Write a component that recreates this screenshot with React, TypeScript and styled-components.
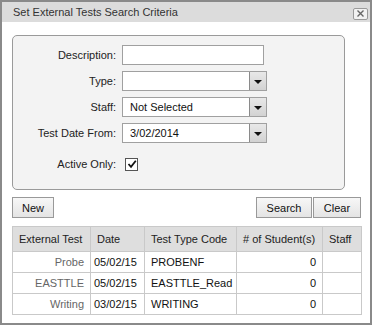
import styled, { createGlobalStyle } from "styled-components";

const GlobalStyle = createGlobalStyle`
  body {
    margin: 0;
    font-family: "Liberation Sans", Arial, sans-serif;
    font-size: 11px;
    color: #222;
  }
`;

const Window = styled.div`
  width: 372px;
  height: 325px;
  box-sizing: border-box;
  border: 2px solid #8a8a8a;
  background: #fff;
  display: flex;
  flex-direction: column;
`;

const TitleBar = styled.div`
  height: 20px;
  background: #dcdcdc;
  display: flex;
  align-items: center;
  justify-content: space-between;
  padding: 0 2px 0 11px;
  font-size: 11px;
  color: #333;
`;

const CloseButton = styled.div`
  width: 13px;
  height: 10px;
  border: 1px solid #9a9a9a;
  border-radius: 2px;
  background: #f2f2f2;
  display: flex;
  align-items: center;
  justify-content: center;
  margin-top: 3px;
  svg {
    width: 7px;
    height: 7px;
  }
`;

const Content = styled.div`
  padding: 13px 9px 0 10px;
  display: flex;
  flex-direction: column;
`;

const Panel = styled.div`
  width: 333px;
  height: 155px;
  box-sizing: border-box;
  border: 1px solid #9a9a9a;
  border-radius: 5px;
  background: #f3f3f3;
  padding-top: 9px;
  display: grid;
  grid-template-columns: 103px auto;
  grid-auto-rows: 20px;
  row-gap: 6px;
  column-gap: 6px;
  align-items: center;
  align-content: start;
`;

const Label = styled.label<{ $extra?: number }>`
  text-align: right;
  margin-top: ${(p) => p.$extra ?? 0}px;
`;

const TextInput = styled.div`
  width: 142px;
  height: 20px;
  box-sizing: border-box;
  border: 1px solid #a0a0a0;
  background: #fff;
`;

const Select = styled.div`
  width: 145px;
  height: 20px;
  box-sizing: border-box;
  border: 1px solid #a0a0a0;
  background: #fff;
  display: flex;
  align-items: stretch;
`;

const SelectValue = styled.div`
  flex: 1;
  padding-left: 7px;
  display: flex;
  align-items: center;
  color: #111;
`;

const SelectArrow = styled.div`
  width: 16px;
  border-left: 1px solid #8a8a8a;
  background: linear-gradient(#e8e8e8, #d2d2d2);
  display: flex;
  align-items: center;
  justify-content: center;
  &::after {
    content: "";
    border-left: 4px solid transparent;
    border-right: 4px solid transparent;
    border-top: 4px solid #111;
    margin-top: 2px;
  }
`;

const CheckWrap = styled.div`
  margin-top: 10px;
  display: flex;
  align-items: center;
  padding-left: 3px;
`;

const CheckBox = styled.div`
  width: 11px;
  height: 11px;
  border: 1px solid #555;
  background: #fff;
  display: flex;
  align-items: center;
  justify-content: center;
  svg {
    width: 10px;
    height: 10px;
  }
`;

const ButtonRow = styled.div`
  margin-top: 7px;
  display: flex;
  justify-content: space-between;
  width: 349px;
`;

const ButtonGroup = styled.div`
  display: flex;
  gap: 1px;
`;

const Button = styled.button<{ $w: number }>`
  width: ${(p) => p.$w}px;
  height: 21px;
  border: 1px solid #999;
  background: linear-gradient(#f7f7f7, #e4e4e4);
  font-family: inherit;
  font-size: 11px;
  color: #111;
  padding: 0;
`;

const Table = styled.table`
  margin-top: 8px;
  width: 349px;
  border-collapse: collapse;
  border: 1px solid #999;
  table-layout: fixed;
  th,
  td {
    border: 1px solid #c9c9c9;
    padding: 0 6px;
    white-space: nowrap;
    overflow: hidden;
  }
  th {
    height: 24px;
    background: #dedede;
    font-weight: normal;
    text-align: left;
    color: #222;
  }
  td {
    height: 20px;
  }
`;

const Cell = styled.td<{ $align?: string; $muted?: boolean; $pad?: number }>`
  text-align: ${(p) => p.$align ?? "left"};
  color: ${(p) => (p.$muted ? "#666" : "#111")};
  && {
    padding-left: ${(p) => p.$pad ?? 6}px;
  }
`;

const rows = [
  { test: "Probe", date: "05/02/15", code: "PROBENF", count: 0 },
  { test: "EASTTLE", date: "05/02/15", code: "EASTTLE_Read", count: 0 },
  { test: "Writing", date: "03/02/15", code: "WRITING", count: 0 },
];

export default function App() {
  return (
    <>
      <GlobalStyle />
      <Window>
        <TitleBar>
          <span>Set External Tests Search Criteria</span>
          <CloseButton>
            <svg viewBox="0 0 7 7">
              <path d="M0.5 0.5 L6.5 6.5 M6.5 0.5 L0.5 6.5" stroke="#666" strokeWidth="1.4" />
            </svg>
          </CloseButton>
        </TitleBar>
        <Content>
          <Panel>
            <Label>Description:</Label>
            <TextInput />
            <Label>Type:</Label>
            <Select>
              <SelectValue />
              <SelectArrow />
            </Select>
            <Label>Staff:</Label>
            <Select>
              <SelectValue>Not Selected</SelectValue>
              <SelectArrow />
            </Select>
            <Label>Test Date From:</Label>
            <Select>
              <SelectValue>3/02/2014</SelectValue>
              <SelectArrow />
            </Select>
            <Label $extra={10}>Active Only:</Label>
            <CheckWrap>
              <CheckBox>
                <svg viewBox="0 0 10 10">
                  <path d="M1.5 5 L4 7.8 L8.8 1.8" fill="none" stroke="#111" strokeWidth="1.8" />
                </svg>
              </CheckBox>
            </CheckWrap>
          </Panel>
          <ButtonRow>
            <Button $w={42}>New</Button>
            <ButtonGroup>
              <Button $w={56}>Search</Button>
              <Button $w={48}>Clear</Button>
            </ButtonGroup>
          </ButtonRow>
          <Table>
            <colgroup>
              <col style={{ width: 78 }} />
              <col style={{ width: 54 }} />
              <col style={{ width: 92 }} />
              <col style={{ width: 86 }} />
              <col style={{ width: 39 }} />
            </colgroup>
            <thead>
              <tr>
                <th>External Test</th>
                <th>Date</th>
                <th>Test Type Code</th>
                <th># of Student(s)</th>
                <th>Staff</th>
              </tr>
            </thead>
            <tbody>
              {rows.map((r) => (
                <tr key={r.test}>
                  <Cell $align="right" $muted>
                    {r.test}
                  </Cell>
                  <Cell $pad={3}>{r.date}</Cell>
                  <Cell>{r.code}</Cell>
                  <Cell $align="right">{r.count}</Cell>
                  <Cell />
                </tr>
              ))}
            </tbody>
          </Table>
        </Content>
      </Window>
    </>
  );
}
